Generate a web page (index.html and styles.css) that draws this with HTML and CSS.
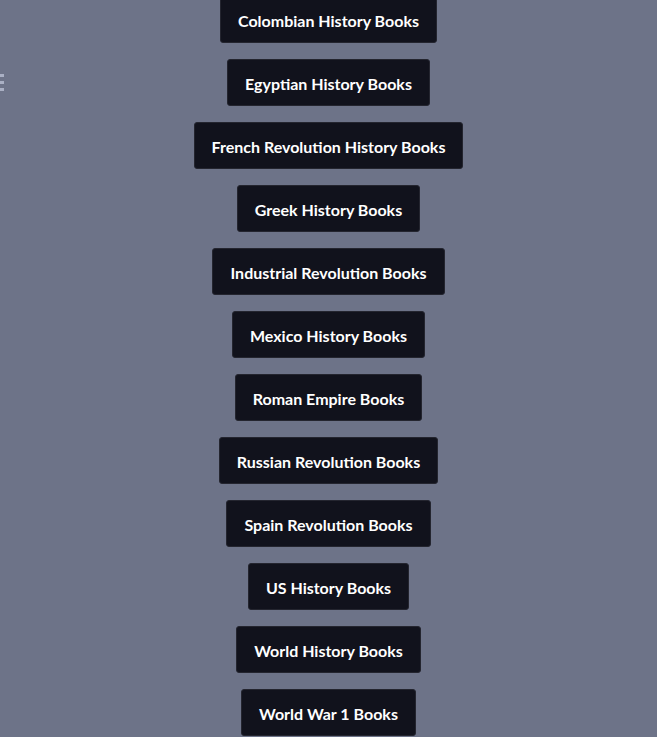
FILE: index.html
```html
<!DOCTYPE html>
<html lang="en">
<head>
    <meta charset="UTF-8">
    <meta name="viewport" content="width=device-width, initial-scale=1.0">
    <title>History Books</title>
    <link rel="stylesheet" href="styles.css">
</head>
<body>
    <div class="menu-dots">
        <span></span>
        <span></span>
        <span></span>
    </div>

    <div class="book-list">
        <button class="book-btn">Colombian History Books</button>
        <button class="book-btn">Egyptian History Books</button>
        <button class="book-btn">French Revolution History Books</button>
        <button class="book-btn">Greek History Books</button>
        <button class="book-btn">Industrial Revolution Books</button>
        <button class="book-btn">Mexico History Books</button>
        <button class="book-btn">Roman Empire Books</button>
        <button class="book-btn">Russian Revolution Books</button>
        <button class="book-btn">Spain Revolution Books</button>
        <button class="book-btn">US History Books</button>
        <button class="book-btn">World History Books</button>
        <button class="book-btn">World War 1 Books</button>
    </div>
</body>
</html>
```

FILE: styles.css
```css
body {
    margin: 0;
    padding: 0;
    background-color: #6d7388;
    font-family: Lato, "Liberation Sans", sans-serif;
    height: 100vh;
    overflow: hidden;
}

.menu-dots {
    position: absolute;
    top: 74px;
    left: 0;
    display: flex;
    flex-direction: column;
    gap: 4px;
}

.menu-dots span {
    display: block;
    width: 4px;
    height: 3px;
    background-color: #aab0c4;
}

.book-list {
    display: flex;
    flex-direction: column;
    align-items: center;
    gap: 16px;
    margin-top: -4px;
}

.book-btn {
    background-color: #11121c;
    color: #ffffff;
    border: 1px solid #24252f;
    border-radius: 3px;
    height: 47px;
    padding: 1px 17px 0;
    font-family: Lato, "Liberation Sans", sans-serif;
    font-size: 16px;
    font-weight: 700;
    cursor: pointer;
}
```
